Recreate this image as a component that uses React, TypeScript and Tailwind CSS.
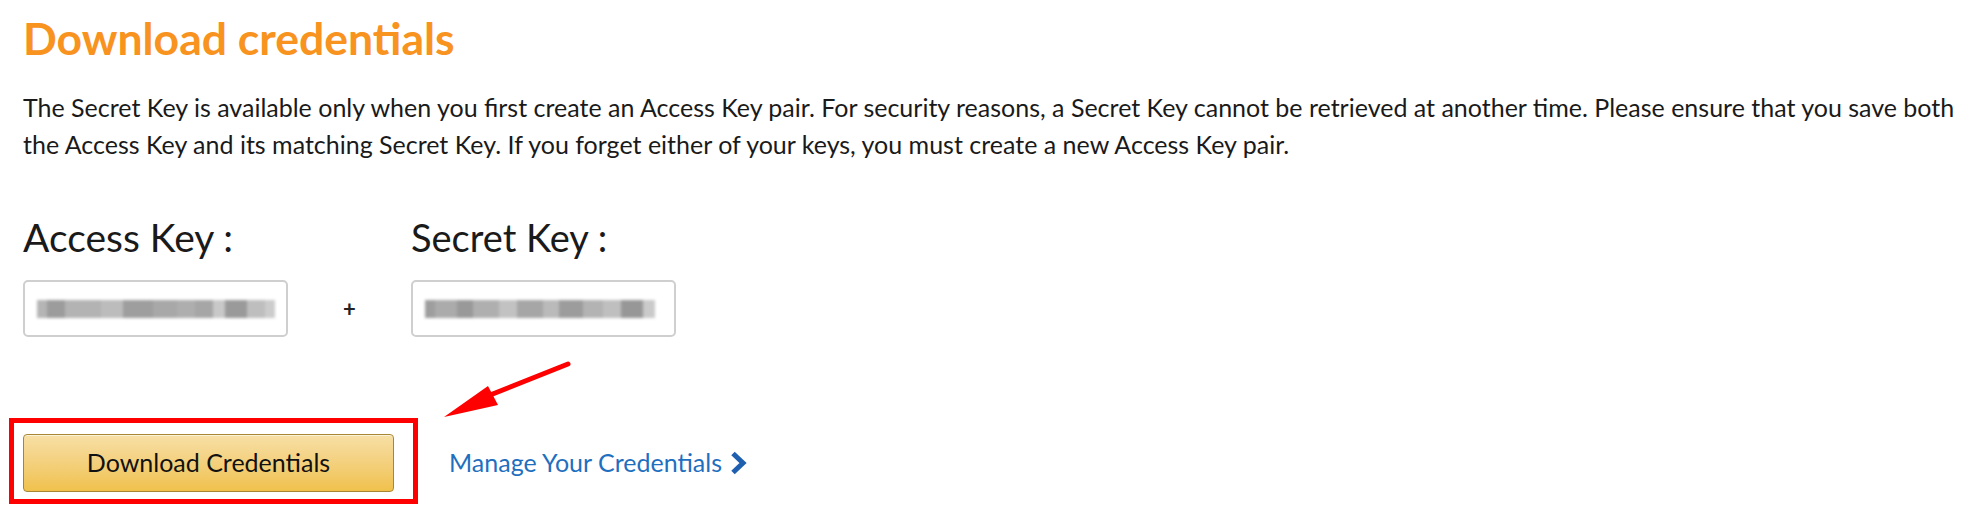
import React from "react";

const accessBlocks = [
  { w: 10, c: "#b5b5b5" },
  { w: 18, c: "#9c9c9c" },
  { w: 36, c: "#b3b3b3" },
  { w: 22, c: "#bcbcbc" },
  { w: 30, c: "#9e9e9e" },
  { w: 24, c: "#a8a8a8" },
  { w: 18, c: "#aeaeae" },
  { w: 18, c: "#a6a6a6" },
  { w: 12, c: "#c8c8c8" },
  { w: 22, c: "#9a9a9a" },
  { w: 18, c: "#bebebe" },
  { w: 10, c: "#cccccc" },
];

const secretBlocks = [
  { w: 10, c: "#9e9e9e" },
  { w: 22, c: "#ababab" },
  { w: 16, c: "#999999" },
  { w: 26, c: "#afafaf" },
  { w: 18, c: "#c2c2c2" },
  { w: 26, c: "#a6a6a6" },
  { w: 16, c: "#bababa" },
  { w: 24, c: "#9c9c9c" },
  { w: 20, c: "#b3b3b3" },
  { w: 18, c: "#bfbfbf" },
  { w: 22, c: "#979797" },
  { w: 12, c: "#cacaca" },
];

function BlurField({ blocks }: { blocks: { w: number; c: string }[] }) {
  return (
    <div className="w-[265px] h-[57px] rounded-[5px] border-2 border-[#cfcfcf] bg-white flex items-center px-[12px]">
      <div className="flex h-[18px] blur-[1.5px]">
        {blocks.map((b, i) => (
          <div key={i} className="h-full" style={{ width: b.w, backgroundColor: b.c }} />
        ))}
      </div>
    </div>
  );
}

export default function App() {
  return (
    <div
      className="w-[1978px] h-[522px] bg-white relative overflow-hidden pl-[23px]"
      style={{ fontFamily: "Lato, 'Open Sans', sans-serif" }}
    >
      <h1 className="pt-[14px] text-[44.5px] leading-[48px] font-bold text-[#f7931e]">
        Download credentials
      </h1>
      <p className="mt-[27px] text-[25px] leading-[37px] text-[#1a1a1a] whitespace-nowrap">
        The Secret Key is available only when you first create an Access Key pair. For security reasons, a Secret Key
        cannot be retrieved at another time. Please ensure that you save both
        <br />
        the Access Key and its matching Secret Key. If you forget either of your keys, you must create a new Access Key
        pair.
      </p>

      <div className="mt-[54px] flex">
        <div className="flex flex-col">
          <div className="text-[39px] leading-[40px] text-[#1a1a1a]">Access Key :</div>
          <div className="mt-[23px]">
            <BlurField blocks={accessBlocks} />
          </div>
        </div>
        <div className="w-[123px] flex flex-col">
          <div className="h-[40px]" />
          <div className="mt-[23px] h-[57px] flex items-center justify-center text-[22px] font-bold text-[#222]">
            +
          </div>
        </div>
        <div className="flex flex-col">
          <div className="text-[38px] leading-[40px] text-[#1a1a1a]">Secret Key :</div>
          <div className="mt-[23px]">
            <BlurField blocks={secretBlocks} />
          </div>
        </div>
      </div>

      <div className="mt-[97px] flex items-center">
        <div className="relative">
          <button
            className="w-[371px] h-[58px] rounded-[4px] border border-[#a88734] text-[25px] text-[#111] bg-gradient-to-b from-[#f7dfa5] to-[#f0c14b] shadow-[inset_0_1px_0_rgba(255,255,255,0.6)]"
            style={{ fontFamily: "Lato, 'Open Sans', sans-serif" }}
          >
            Download Credentials
          </button>
          <div className="absolute left-[-14px] top-[-16px] w-[409px] h-[86px] border-[5px] border-[#ff0000] pointer-events-none" />
        </div>
        <a className="ml-[55px] text-[25px] text-[#1f6fbf] flex items-center gap-[8px]" href="#">
          Manage Your Credentials
          <svg width="17" height="24" viewBox="0 0 17 24">
            <path d="M3 2.5 L13 12 L3 21.5" fill="none" stroke="#1f5fb0" strokeWidth="5" strokeLinejoin="miter" />
          </svg>
        </a>
      </div>

      <svg className="absolute left-0 top-0 pointer-events-none" width="1978" height="522">
        <line x1="568" y1="364" x2="470" y2="403" stroke="#ff0000" strokeWidth="5" strokeLinecap="round" />
        <polygon points="444,417 488,386 498,405" fill="#ff0000" />
      </svg>
    </div>
  );
}
